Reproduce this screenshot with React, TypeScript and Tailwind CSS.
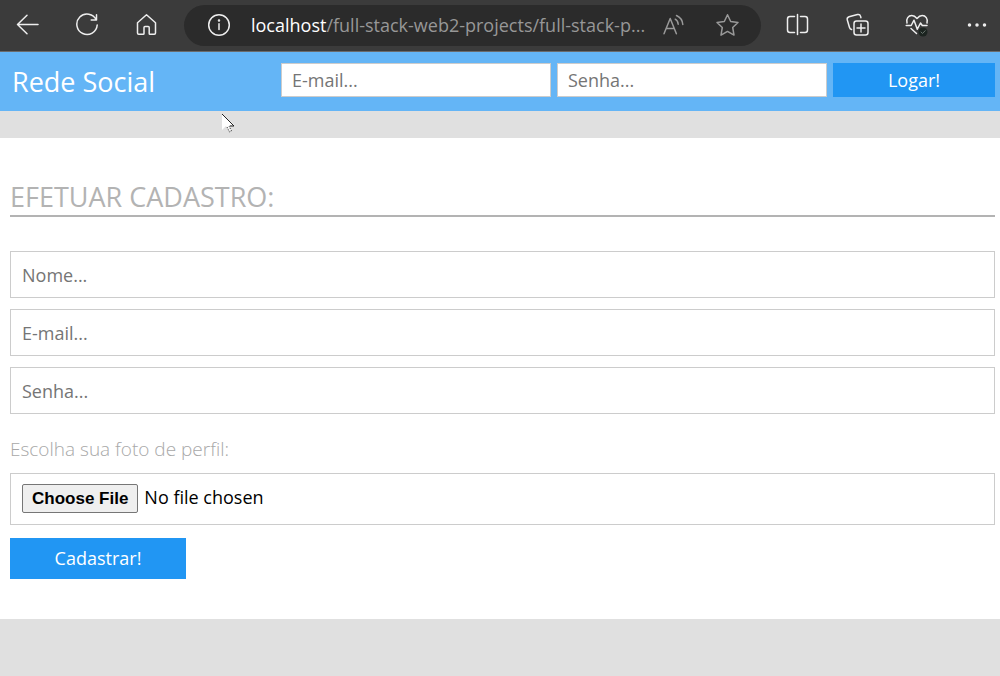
import type { ReactNode } from "react";

function Icon({ children, className = "" }: { children: ReactNode; className?: string }) {
  return (
    <svg
      viewBox="0 0 24 24"
      aria-hidden="true"
      className={`size-6 shrink-0 fill-none stroke-current ${className}`}
      strokeWidth="1.5"
      strokeLinecap="round"
      strokeLinejoin="round"
    >
      {children}
    </svg>
  );
}

function ToolButton({ label, children }: { label: string; children: ReactNode }) {
  return (
    <button type="button" aria-label={label} className="flex size-6 items-center justify-center">
      {children}
    </button>
  );
}

function BrowserBar() {
  return (
    <div className="flex h-[52px] items-center border-b border-[#6b6b6b] bg-[#3b3b3b] pr-[11px] pb-px pl-4 text-[#eeeeee]">
      <div className="flex shrink-0 gap-9">
        <ToolButton label="Back">
          <Icon>
            <path d="M22 11.5H1.5M11 2.3 1.5 11.5 11 20.7" />
          </Icon>
        </ToolButton>
        <ToolButton label="Reload">
          <Icon>
            <path d="M20.3 7A10.2 10.2 0 1 0 21.2 12M20.5 1.8v5.3h-5.3" />
          </Icon>
        </ToolButton>
        <ToolButton label="Home">
          <Icon>
            <path d="M1.5 9.7 10.5 1.8 19.5 9.7V20a1.2 1.2 0 0 1-1.2 1.2H14a.8.8 0 0 1-.8-.8v-5.8a1 1 0 0 0-1-1H9a1 1 0 0 0-1 1v5.8a.8.8 0 0 1-.8.8H2.7a1.2 1.2 0 0 1-1.2-1.2z" />
          </Icon>
        </ToolButton>
      </div>

      <div className="ml-6 flex h-[41px] min-w-0 flex-1 items-center rounded-full bg-[#2b2b2b] pr-[22px] pl-[23px]">
        <ToolButton label="Site information">
          <Icon>
            <circle cx="12" cy="12" r="10.3" />
            <path d="M12 10.8v5.6" />
            <circle cx="12" cy="7.6" r=".5" className="fill-current" />
          </Icon>
        </ToolButton>
        <p className="ml-5 min-w-0 flex-1 truncate font-['Open_Sans',sans-serif] text-[18px] leading-6 text-[#979797]">
          <span className="text-white">localhost</span>/full-stack-web2-projects/full-stack-p...
        </p>
        <div className="ml-3 flex shrink-0 gap-[29px] text-[#999999]">
          <ToolButton label="Read aloud">
            <Icon>
              <path d="M2 20.7 8.2 5.5 14.400 20.7M4.2 15.5h8M13.2 6.2c1.800 1 2.800 2.800 3 5M14.500 2.500c3.700 1.700 6 5 6.300 9" />
            </Icon>
          </ToolButton>
          <ToolButton label="Add to favorites">
            <Icon>
              <path d="m12.500 1.800 3.200 6.700 7.300 1-5.300 5 1.300 7.600-6.500-3.700L6 22.100l1.300-7.600-5.300-5 7.300-1z" />
            </Icon>
          </ToolButton>
        </div>
      </div>

      <div className="ml-6 flex shrink-0 gap-9">
        <ToolButton label="Split screen">
          <Icon>
            <path d="M9.500 3.500H5A2.500 2.500 0 0 0 2.500 6v11A2.500 2.500 0 0 0 5 19.500h4.500M15.500 3.500H20A2.500 2.500 0 0 1 22.500 6v11a2.500 2.500 0 0 1-2.500 2.500h-4.500M12.500 1.500v20" />
          </Icon>
        </ToolButton>
        <ToolButton label="Collections">
          <Icon>
            <rect x="9" y="8" width="14" height="14" rx="2.5" />
            <path d="M16 11v8M12 15h8M6.600 16.500c-1.100-.2-1.800-1-2.100-2L2.300 7c-.4-1.500.3-2.700 1.700-3.200L12.500 1.600c1.500-.4 2.700.4 3.100 1.800l.3 1.300" />
          </Icon>
        </ToolButton>
        <ToolButton label="Browser essentials">
          <Icon>
            <path d="M2 10C.8 5.800 3.500 2.500 6.800 2.500c2.500 0 3.800 1.300 5.200 3 1.400-1.700 2.700-3 5.200-3 3.300 0 6 3.300 4.800 7.500M1.200 12.500h5L9 7.200l3.300 9 3.200-6.200 1.800 2.500H22M6 15.500l5.500 5" />
            <circle cx="18" cy="19" r="4.5" className="fill-[#1c2420]" strokeWidth="0" />
            <path d="m16 19 1.500 1.500 2.700-2.800" className="stroke-[#68736d]" strokeWidth="1" />
          </Icon>
        </ToolButton>
        <ToolButton label="Settings and more">
          <Icon>
            <circle cx="4.500" cy="12" r="1" className="fill-current" />
            <circle cx="12" cy="12" r="1" className="fill-current" />
            <circle cx="19.500" cy="12" r="1" className="fill-current" />
          </Icon>
        </ToolButton>
      </div>
    </div>
  );
}

const loginField =
  "h-[34px] w-full min-w-0 border border-[#cccccc] bg-white px-[10px] text-[18px] text-black placeholder:text-[#757575] focus:outline-none";
const signupField =
  "h-[47px] w-full border border-[#cccccc] bg-white px-[11px] text-[18px] text-black placeholder:text-[#757575] focus:outline-none";

function LoginHeader() {
  return (
    <header className="grid grid-cols-[262px_1fr] items-start bg-[#64b5f6] pt-[11px] pr-[5px] pb-[10px] pl-3">
      <h1 className="text-[27px] leading-[38px] text-white">Rede Social</h1>
      <form className="grid grid-cols-[5fr_5fr_3fr] gap-[6px] pl-[7px]" onSubmit={(e) => e.preventDefault()}>
        <input type="email" aria-label="E-mail" placeholder="E-mail..." className={loginField} />
        <input type="password" aria-label="Senha" placeholder="Senha..." className={loginField} />
        <button type="submit" className="h-[34px] bg-[#2196f3] text-[18px] text-white">
          Logar!
        </button>
      </form>
    </header>
  );
}

function SignupForm() {
  return (
    <main className="bg-white pt-10 pr-[5px] pb-10 pl-[10px]">
      <h2 className="border-b-2 border-[#b3b3b3] text-[27px] leading-[37px] text-[#b3b3b3]">EFETUAR CADASTRO:</h2>
      <form className="mt-[34px]" onSubmit={(e) => e.preventDefault()}>
        <div className="flex flex-col gap-[11px]">
          <input type="text" aria-label="Nome" placeholder="Nome..." className={signupField} />
          <input type="email" aria-label="E-mail" placeholder="E-mail..." className={signupField} />
          <input type="password" aria-label="Senha" placeholder="Senha..." className={signupField} />
        </div>
        <label htmlFor="photo" className="mt-[22px] block text-[19px] leading-[27px] font-light text-[#a8a8a8]">
          Escolha sua foto de perfil:
        </label>
        <input
          id="photo"
          type="file"
          className="mt-[10px] block h-[52px] w-full border border-[#cccccc] px-[11px] py-[10px] text-[18px] leading-[27px] text-black file:mr-[6px] file:h-[29px] file:rounded-[2px] file:border file:border-solid file:border-[#767676] file:bg-[#efefef] file:px-[9px] file:py-0 file:font-['Liberation_Sans',Arial,sans-serif] file:text-[17px] file:font-bold file:text-black"
        />
        <button type="submit" className="mt-[13px] h-[41px] w-44 bg-[#2196f3] text-[18px] text-white">
          Cadastrar!
        </button>
      </form>
    </main>
  );
}

function Pointer() {
  return (
    <svg viewBox="0 0 14 21" aria-hidden="true" className="pointer-events-none absolute top-[113px] left-[221px] h-[21px] w-[14px]">
      <path d="M1 1v16l4-4 3 6 3-1-3-6h5z" fill="#fff" />
      <path d="m1 1 12 12H9" fill="none" stroke="#222" strokeWidth="1" />
      <path d="m6 14 2.500 5 2-1-2.500-5" fill="none" stroke="#444" strokeWidth="1" strokeDasharray="1.500 1" />
    </svg>
  );
}

export default function App() {
  return (
    <div className="relative min-h-screen bg-[#e0e0e0] font-['Open_Sans','Noto_Sans',sans-serif]">
      <BrowserBar />
      <LoginHeader />
      <div className="h-[27px]" />
      <SignupForm />
      <Pointer />
    </div>
  );
}
